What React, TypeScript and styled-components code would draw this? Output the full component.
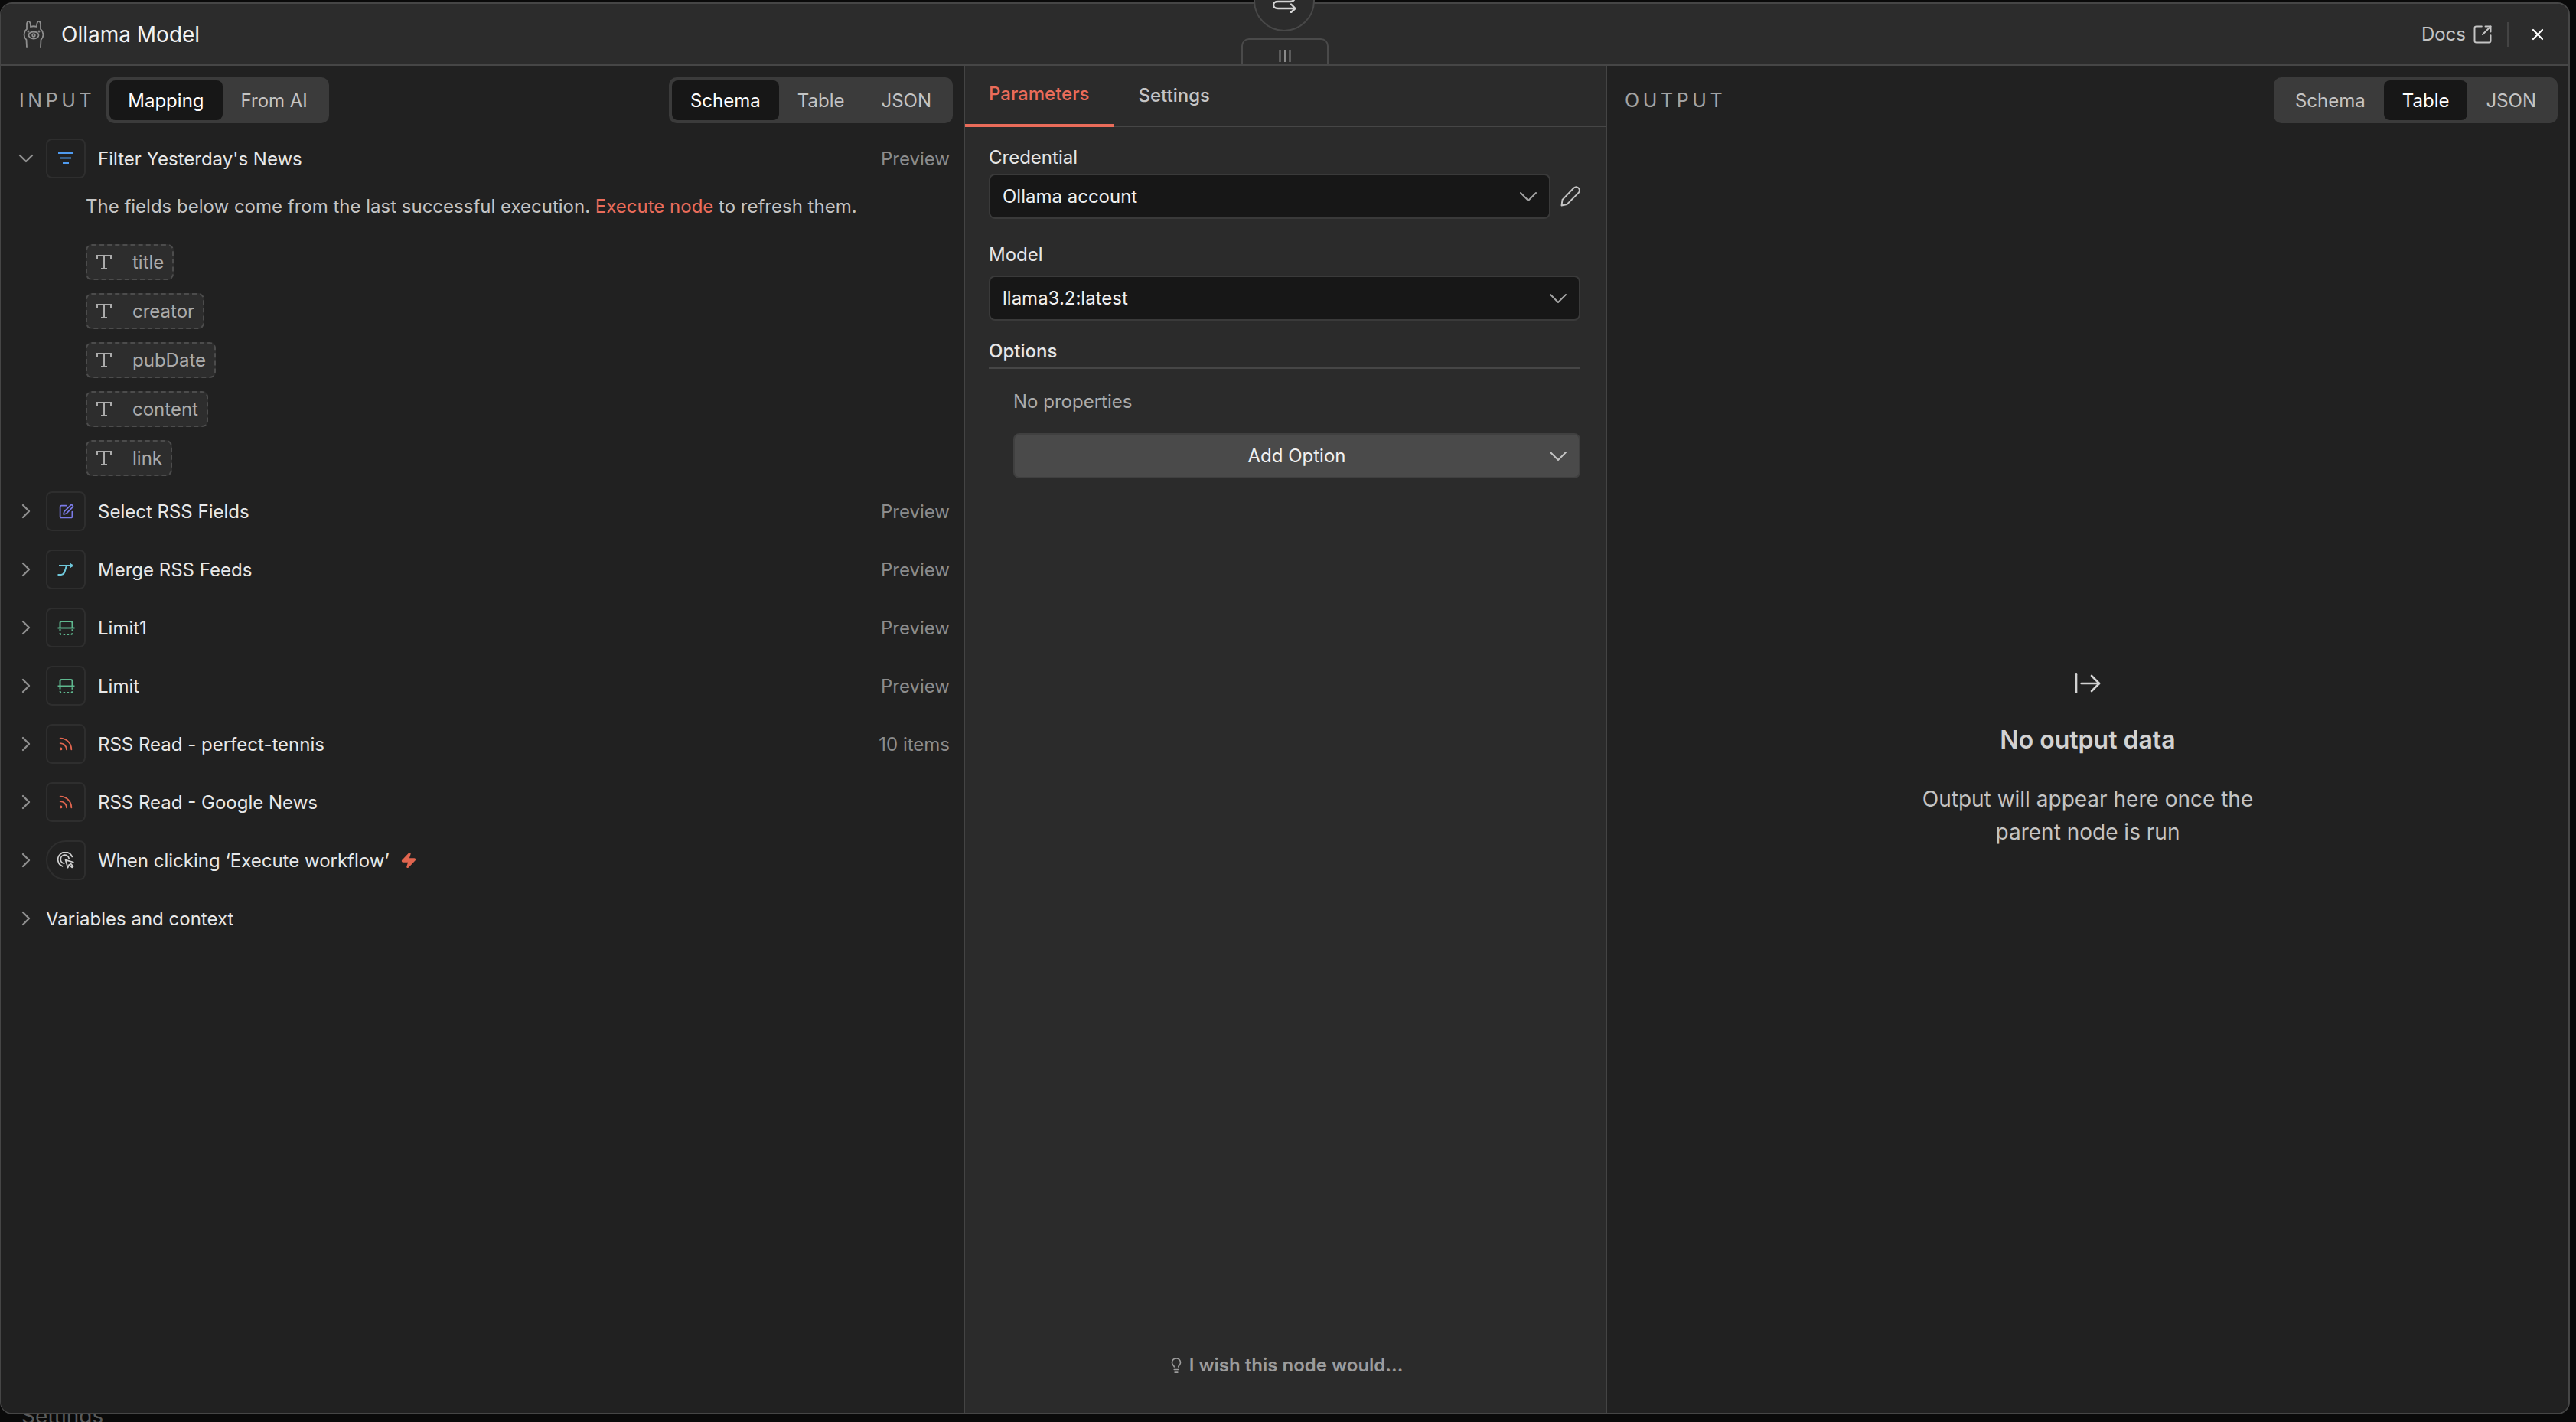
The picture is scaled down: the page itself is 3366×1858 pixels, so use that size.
import React from 'react';
import styled, { createGlobalStyle } from 'styled-components';
import {
    ArrowRightFromLine,
    ChevronDown,
    ChevronRight,
    Lightbulb,
    Rss,
    SquareArrowOutUpRight,
    SquarePen,
    X,
    Zap,
} from 'lucide-react';

const GlobalStyle = createGlobalStyle`
    html, body {
        margin: 0;
        padding: 0;
        background: #0a0a0a;
        font-family: Inter, "Liberation Sans", sans-serif;
    }
    * { box-sizing: border-box; }
`;

const Page = styled.div`
    position: relative;
    width: 3366px;
    height: 1858px;
    padding: 3px 8px 10px 0;
    overflow: hidden;
    background: #0a0a0a;
`;

const BackdropText = styled.div`
    position: absolute;
    left: 28px;
    bottom: -8px;
    font-size: 28px;
    line-height: 32px;
    color: #5a5a5a;
`;

const Modal = styled.div`
    position: relative;
    display: flex;
    flex-direction: column;
    height: 100%;
    border: 2px solid #464646;
    border-left-width: 1px;
    border-radius: 16px;
    overflow: hidden;
    background: #212121;
`;

const Header = styled.header`
    display: flex;
    align-items: center;
    height: 81px;
    flex-shrink: 0;
    padding-left: 29px;
    background: #2c2c2c;
    border-bottom: 2px solid #464646;
`;

const Title = styled.h1`
    margin: 0 0 0 22px;
    font-size: 28px;
    font-weight: 400;
    color: #f2f2f2;
`;

const HeaderRight = styled.div`
    display: flex;
    align-items: center;
    margin-left: auto;
`;

const DocsLink = styled.a`
    display: flex;
    align-items: center;
    gap: 8px;
    font-size: 24px;
    color: #c4c4c4;
    padding-right: 18px;
    height: 32px;
    border-right: 2px solid #444;
`;

const CloseButton = styled.button`
    display: flex;
    margin: 0 28px 0 26px;
    padding: 0;
    border: 0;
    background: none;
    color: #fff;
`;

const SwitchBubble = styled.div`
    position: absolute;
    left: 1638px;
    top: -39px;
    width: 80px;
    height: 80px;
    display: flex;
    align-items: flex-end;
    justify-content: center;
    padding-bottom: 22px;
    border: 2px solid #484848;
    border-radius: 50%;
    background: #2c2c2c;
    z-index: 2;
`;

const DragHandle = styled.div`
    position: absolute;
    left: 1621px;
    top: 45px;
    width: 114px;
    height: 33px;
    display: flex;
    justify-content: center;
    padding-top: 12px;
    border: 2px solid #4a4a4a;
    border-bottom: 0;
    border-radius: 10px 10px 0 0;
`;

const Panels = styled.div`
    display: flex;
    flex: 1;
    min-height: 0;
`;

const InputPanel = styled.section`
    width: 1258px;
    flex-shrink: 0;
    background: #212121;
`;

const CenterPanel = styled.section`
    display: flex;
    flex-direction: column;
    width: 841px;
    flex-shrink: 0;
    background: #2b2b2b;
    border-left: 2px solid #444;
    border-right: 2px solid #444;
`;

const OutputPanel = styled.section`
    display: flex;
    flex-direction: column;
    flex: 1;
    background: #212121;
`;

const PanelBar = styled.div<{ $left: number; $right: number }>`
    display: flex;
    align-items: center;
    justify-content: space-between;
    height: 60px;
    margin-top: 15px;
    padding: 0 ${(p) => p.$right}px 0 ${(p) => p.$left}px;
`;

const BarGroup = styled.div`
    display: flex;
    align-items: center;
    gap: 15px;
`;

const PanelLabel = styled.span`
    font-size: 25px;
    font-weight: 400;
    letter-spacing: 4.6px;
    color: #a3a3a3;
`;

const Segmented = styled.div`
    display: flex;
    height: 60px;
    padding: 4px;
    border-radius: 10px;
    background: #3b3b3b;
`;

const SegmentItem = styled.div<{ $active?: boolean }>`
    display: flex;
    align-items: center;
    padding: 0 24px;
    font-size: 24px;
    border-radius: 8px;
    color: ${(p) => (p.$active ? '#fff' : '#c4c4c4')};
    background: ${(p) => (p.$active ? '#171717' : 'transparent')};
`;

const NodeList = styled.div`
    display: flex;
    flex-direction: column;
    gap: 24px;
    margin-top: 20px;
`;

const NodeBlock = styled.div`
    display: flex;
    flex-direction: column;
    margin-bottom: -4px;
`;

const NodeRow = styled.div`
    display: flex;
    align-items: center;
    height: 52px;
    padding: 0 18px 0 17px;
`;

const Caret = styled.span`
    display: flex;
    width: 32px;
    margin-right: 10px;
    flex-shrink: 0;
    color: #8f8f8f;
`;

const NodeIconBox = styled.span<{ $trigger?: boolean }>`
    display: flex;
    align-items: center;
    justify-content: center;
    width: 52px;
    height: 52px;
    margin-right: 16px;
    flex-shrink: 0;
    border: 2px solid #2e2e2e;
    border-radius: ${(p) => (p.$trigger ? '26px 8px 8px 26px' : '8px')};
`;

const NodeName = styled.span`
    font-size: 24px;
    color: #e8e8e8;
`;

const NodeMeta = styled.span`
    margin-left: auto;
    font-size: 24px;
    color: #8c8c8c;
`;

const Bolt = styled.span`
    display: flex;
    margin-left: 14px;
    color: #e0654f;
`;

const Hint = styled.p`
    margin: 19px 0 0 111px;
    font-size: 24px;
    line-height: 36px;
    color: #c4c4c4;
`;

const HintLink = styled.span`
    color: #ea6c5a;
`;

const PillList = styled.div`
    display: flex;
    flex-direction: column;
    align-items: flex-start;
    gap: 17px;
    margin: 31px 0 0 111px;
`;

const Pill = styled.div`
    display: flex;
    align-items: center;
    height: 47px;
    padding: 0 11px 0 12px;
    border: 2px dashed #4c4c4c;
    border-radius: 8px;
    background: #2d2d2d;
    font-size: 24px;
    color: #ababab;
`;

const PillText = styled.span`
    margin-left: 27px;
`;

const TabBar = styled.div`
    display: flex;
    height: 80px;
    flex-shrink: 0;
    border-bottom: 2px solid #464646;
`;

const Tab = styled.div<{ $active?: boolean }>`
    display: flex;
    align-items: center;
    height: 80px;
    padding: 0 33px 4px 31px;
    font-size: 24px;
    font-weight: 500;
    color: ${(p) => (p.$active ? '#ea6c5a' : '#c4c4c4')};
    border-bottom: ${(p) => (p.$active ? '4px solid #ea6c5a' : '0')};
`;

const Form = styled.div`
    display: flex;
    flex-direction: column;
    padding: 24px 33px 0 31px;
`;

const FieldLabel = styled.label<{ $gap: number; $top?: number }>`
    margin: ${(p) => p.$top ?? 0}px 0 ${(p) => p.$gap}px;
    font-size: 24px;
    line-height: 32px;
    color: #e6e6e6;
`;

const FieldRow = styled.div`
    display: flex;
    align-items: center;
`;

const SelectBox = styled.div`
    display: flex;
    flex: 1;
    align-items: center;
    justify-content: space-between;
    height: 59px;
    padding: 0 7px 0 16px;
    border: 2px solid #3a3a3a;
    border-radius: 8px;
    background: #171717;
    font-size: 24px;
    color: #f0f0f0;
`;

const EditButton = styled.span`
    display: flex;
    margin-left: 13px;
`;

const SectionHead = styled.div`
    margin-top: 24px;
    padding-bottom: 5px;
    border-bottom: 2px solid #464646;
    font-size: 24px;
    font-weight: 500;
    line-height: 32px;
    color: #e6e6e6;
`;

const EmptyNote = styled.div`
    margin: 27px 0 0 32px;
    font-size: 24px;
    line-height: 32px;
    color: #ababab;
`;

const AddButton = styled.div`
    position: relative;
    display: flex;
    align-items: center;
    justify-content: center;
    height: 59px;
    margin: 25px 0 0 32px;
    border: 2px solid #404040;
    border-radius: 8px;
    background: #4a4a4a;
    font-size: 24px;
    color: #f0f0f0;
`;

const AddChevron = styled.span`
    position: absolute;
    right: 7px;
    display: flex;
`;

const WishLink = styled.div`
    display: flex;
    align-items: center;
    justify-content: center;
    gap: 6px;
    margin-top: auto;
    padding-bottom: 46px;
    font-size: 24px;
    font-weight: 600;
    line-height: 32px;
    color: #9c9c9c;
`;

const EmptyState = styled.div`
    display: flex;
    flex: 1;
    flex-direction: column;
    align-items: center;
    justify-content: center;
    padding-bottom: 26px;
    text-align: center;
`;

const EmptyTitle = styled.h3`
    margin: 32px 0 0;
    font-size: 32px;
    font-weight: 600;
    line-height: 44px;
    color: #d2d2d2;
`;

const EmptyText = styled.p`
    width: 480px;
    margin: 34px 0 0;
    font-size: 28px;
    line-height: 43px;
    color: #c4c4c4;
`;

const LlamaIcon = () => (
    <svg width="28" height="37" viewBox="0 0 28 37" fill="none" stroke="#8f8f8f" strokeWidth="1.8" strokeLinecap="round" strokeLinejoin="round">
        <path d="M5 36 L4.5 26 Q0.5 22 2 17 Q2.5 14 5 12 L5 5 Q6 1 8 2 Q10 3 10 9 Q14 7.5 18 9 Q18 3 20 2 Q22 1 23 5 L23 12 Q25.5 14 26 17 Q27.5 22 23.5 26 L23 36" />
        <ellipse cx="14" cy="20" rx="6.5" ry="4.5" />
        <circle cx="14" cy="20" r="1.8" />
        <circle cx="7" cy="15" r="0.6" />
        <circle cx="21" cy="15" r="0.6" />
    </svg>
);

const TypeIcon = () => (
    <svg width="20" height="19" viewBox="0 0 20 19" fill="none" stroke="#ababab" strokeWidth="2">
        <path d="M1 5 V1 H19 V5 M10 1 V18 M6 18 H14" />
    </svg>
);

const FilterIcon = () => (
    <svg width="22" height="16" viewBox="0 0 22 16" fill="none" stroke="#4f9bf0" strokeWidth="2">
        <path d="M1 1 H21 M4 7.5 H18 M7 14 H15" />
    </svg>
);

const MergeIcon = () => (
    <svg width="22" height="18" viewBox="0 0 22 18" fill="none" stroke="#6fc7da" strokeWidth="2">
        <path d="M2 4 H19 M12 4 C10 9 10 16 5 16 H0.5" />
        <path d="M17 1.5 L21 4 L17 6.5 Z" fill="#6fc7da" strokeWidth="1" />
    </svg>
);

const LimitIcon = () => (
    <svg width="23" height="19" viewBox="0 0 23 19" fill="none" stroke="#5fb88f" strokeWidth="2">
        <path d="M3.5 9 V3 Q3.5 1 5.5 1 H17.5 Q19.5 1 19.5 3 V9 M0.5 9.5 H22.5" />
        <path d="M3.5 11 V16 Q3.5 18 5.5 18 H17.5 Q19.5 18 19.5 16 V11" strokeDasharray="2.5 2.5" />
    </svg>
);

const TriggerIcon = () => (
    <svg width="22" height="22" viewBox="0 0 24 24" fill="none" stroke="#d0d0d0" strokeWidth="1.9" strokeLinecap="round" strokeLinejoin="round">
        <path d="M7 20.5 A10.5 10.5 0 1 1 21 7" />
        <path d="M9.5 16.5 A6 6 0 1 1 16.5 9.5" />
        <path d="M11.5 11.5 l3.4 11 1.8 -4.2 4.2 4 1.6 -1.6 -4 -4.2 4.2 -1.8 z" />
    </svg>
);

const SwitchIcon = () => (
    <svg width="32" height="18" viewBox="0 0 32 18" fill="none" stroke="#d4d4d4" strokeWidth="2.4" strokeLinecap="round" strokeLinejoin="round">
        <path d="M30 -1 Q28 3 24 3 H8 Q2 3 2 7.5 Q2 12 8 12 H30 M25 6.5 L30.5 12 L25 17" />
    </svg>
);

const HandleBars = () => (
    <svg width="16" height="18" viewBox="0 0 16 18" fill="none" stroke="#8a8a8a" strokeWidth="2">
        <path d="M1.5 1 V17 M8 1 V17 M14.5 1 V17" />
    </svg>
);

const SlimPencil = () => (
    <svg width="26" height="27" viewBox="0 0 26 27" fill="none" stroke="#c4c4c4" strokeWidth="1.9" strokeLinejoin="round">
        <path d="M1.5 25.5 L2.5 18 L17.5 2.5 Q20.5 0 23.5 2.5 Q26 5.5 24 8.5 L8.5 24 Z" />
    </svg>
);

const SegmentTabs = ({ items, active }: { items: string[]; active: string }) => (
    <Segmented>
        {items.map((item) => (
            <SegmentItem key={item} $active={item === active}>
                {item}
            </SegmentItem>
        ))}
    </Segmented>
);

const fields = ['title', 'creator', 'pubDate', 'content', 'link'];

const nodes = [
    { name: 'Select RSS Fields', meta: 'Preview', icon: <SquarePen size={21} color="#7b7be8" /> },
    { name: 'Merge RSS Feeds', meta: 'Preview', icon: <MergeIcon /> },
    { name: 'Limit1', meta: 'Preview', icon: <LimitIcon /> },
    { name: 'Limit', meta: 'Preview', icon: <LimitIcon /> },
    { name: 'RSS Read - perfect-tennis', meta: '10 items', icon: <Rss size={22} color="#e0654f" /> },
    { name: 'RSS Read - Google News', meta: '', icon: <Rss size={22} color="#e0654f" /> },
];

const App = () => {
    const viewTabs = ['Schema', 'Table', 'JSON'];

    return (
        <Page>
            <GlobalStyle />
            <BackdropText>Settings</BackdropText>
            <SwitchBubble>
                <SwitchIcon />
            </SwitchBubble>
            <Modal>
                <DragHandle>
                    <HandleBars />
                </DragHandle>
                <Header>
                    <LlamaIcon />
                    <Title>Ollama Model</Title>
                    <HeaderRight>
                        <DocsLink>
                            Docs
                            <SquareArrowOutUpRight size={28} strokeWidth={1.7} />
                        </DocsLink>
                        <CloseButton>
                            <X size={24} strokeWidth={2.2} />
                        </CloseButton>
                    </HeaderRight>
                </Header>
                <Panels>
                    <InputPanel>
                        <PanelBar $left={24} $right={14}>
                            <BarGroup>
                                <PanelLabel>INPUT</PanelLabel>
                                <SegmentTabs items={['Mapping', 'From AI']} active="Mapping" />
                            </BarGroup>
                            <SegmentTabs items={viewTabs} active="Schema" />
                        </PanelBar>
                        <NodeList>
                            <NodeBlock>
                                <NodeRow>
                                    <Caret>
                                        <ChevronDown size={32} strokeWidth={1.8} />
                                    </Caret>
                                    <NodeIconBox>
                                        <FilterIcon />
                                    </NodeIconBox>
                                    <NodeName>Filter Yesterday's News</NodeName>
                                    <NodeMeta>Preview</NodeMeta>
                                </NodeRow>
                                <Hint>
                                    The fields below come from the last successful execution.{' '}
                                    <HintLink>Execute node</HintLink> to refresh them.
                                </Hint>
                                <PillList>
                                    {fields.map((field) => (
                                        <Pill key={field}>
                                            <TypeIcon />
                                            <PillText>{field}</PillText>
                                        </Pill>
                                    ))}
                                </PillList>
                            </NodeBlock>
                            {nodes.map((node) => (
                                <NodeRow key={node.name}>
                                    <Caret>
                                        <ChevronRight size={32} strokeWidth={1.8} />
                                    </Caret>
                                    <NodeIconBox>{node.icon}</NodeIconBox>
                                    <NodeName>{node.name}</NodeName>
                                    {node.meta && <NodeMeta>{node.meta}</NodeMeta>}
                                </NodeRow>
                            ))}
                            <NodeRow>
                                <Caret>
                                    <ChevronRight size={32} strokeWidth={1.8} />
                                </Caret>
                                <NodeIconBox $trigger>
                                    <TriggerIcon />
                                </NodeIconBox>
                                <NodeName>When clicking ‘Execute workflow’</NodeName>
                                <Bolt>
                                    <Zap size={22} fill="#e0654f" />
                                </Bolt>
                            </NodeRow>
                            <NodeRow>
                                <Caret>
                                    <ChevronRight size={32} strokeWidth={1.8} />
                                </Caret>
                                <NodeName>Variables and context</NodeName>
                            </NodeRow>
                        </NodeList>
                    </InputPanel>
                    <CenterPanel>
                        <TabBar>
                            <Tab $active>Parameters</Tab>
                            <Tab>Settings</Tab>
                        </TabBar>
                        <Form>
                            <FieldLabel $gap={5}>Credential</FieldLabel>
                            <FieldRow>
                                <SelectBox>
                                    Ollama account
                                    <ChevronDown size={40} strokeWidth={1.2} color="#a3a3a3" />
                                </SelectBox>
                                <EditButton>
                                    <SlimPencil />
                                </EditButton>
                            </FieldRow>
                            <FieldLabel $top={31} $gap={11}>
                                Model
                            </FieldLabel>
                            <FieldRow>
                                <SelectBox>
                                    llama3.2:latest
                                    <ChevronDown size={40} strokeWidth={1.2} color="#a3a3a3" />
                                </SelectBox>
                            </FieldRow>
                            <SectionHead>Options</SectionHead>
                            <EmptyNote>No properties</EmptyNote>
                            <AddButton>
                                Add Option
                                <AddChevron>
                                    <ChevronDown size={40} strokeWidth={1.2} color="#c4c4c4" />
                                </AddChevron>
                            </AddButton>
                        </Form>
                        <WishLink>
                            <Lightbulb size={22} strokeWidth={1.8} />I wish this node would...
                        </WishLink>
                    </CenterPanel>
                    <OutputPanel>
                        <PanelBar $left={23} $right={14}>
                            <PanelLabel>OUTPUT</PanelLabel>
                            <SegmentTabs items={viewTabs} active="Table" />
                        </PanelBar>
                        <EmptyState>
                            <ArrowRightFromLine size={40} strokeWidth={1.6} color="#d2d2d2" />
                            <EmptyTitle>No output data</EmptyTitle>
                            <EmptyText>Output will appear here once the parent node is run</EmptyText>
                        </EmptyState>
                    </OutputPanel>
                </Panels>
            </Modal>
        </Page>
    );
};

export default App;
